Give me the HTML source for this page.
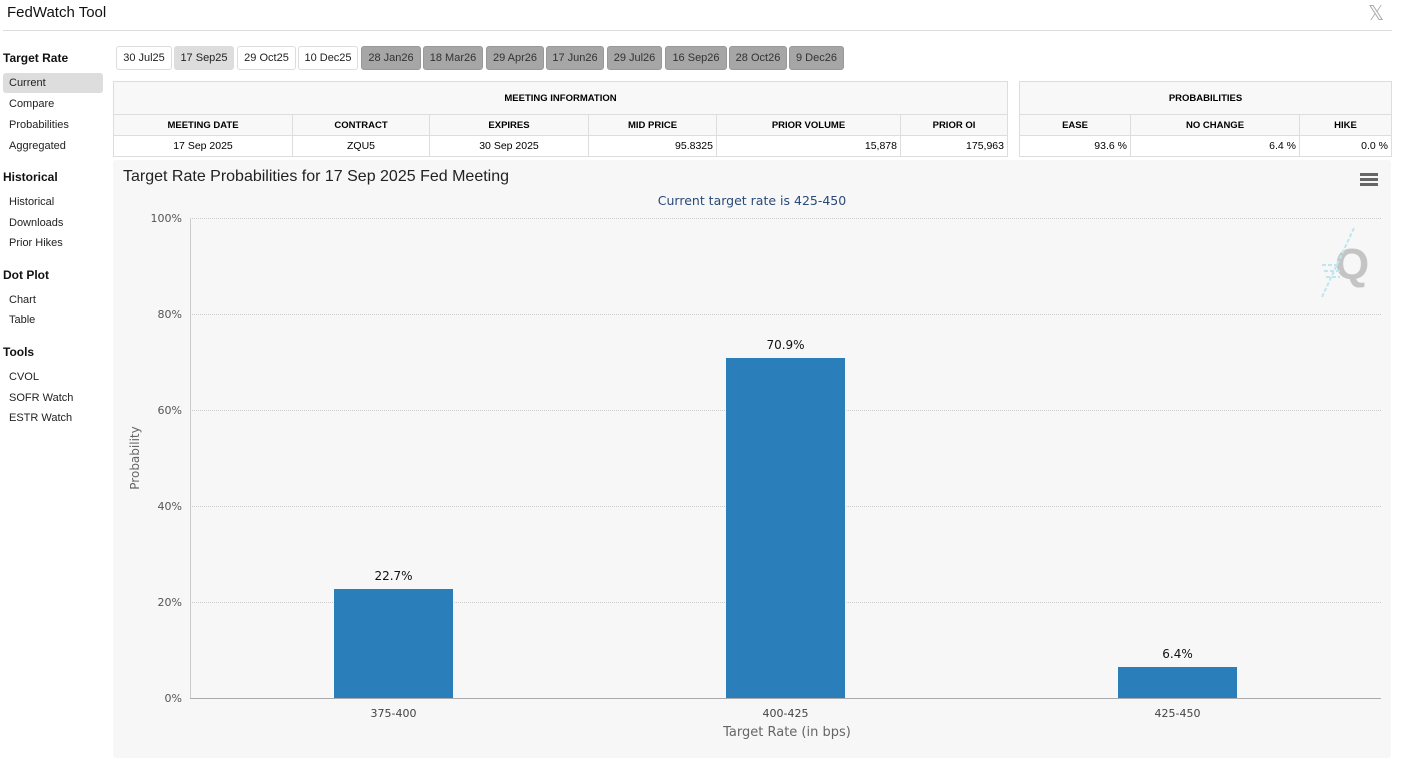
<!DOCTYPE html>
<html><head><style>
body{margin:0;width:1402px;height:766px;background:#fff;font-family:"Liberation Sans",Arial,sans-serif;position:relative;overflow:hidden;color:#000}
.a{position:absolute}
.btn{position:absolute;top:46px;height:22px;border:1px solid #ddd;border-radius:3px;font-size:11px;line-height:22px;text-align:center;background:#fff;color:#222;box-sizing:content-box}
.g{background:#a6a6a6;border-color:#999;color:#333}
.nav{position:absolute;left:9px;font-size:11px;color:#222}
.hd{position:absolute;left:3px;font-size:12px;font-weight:bold;color:#111}
table{position:absolute;border-collapse:collapse;font-size:10px}
td{border:1px solid #ddd;padding:0 3px;height:20px}
.h td{font-weight:bold;text-align:center;background:#f8f8f8;font-size:9.5px}
.t td{height:32px;font-weight:bold;text-align:center;background:#f8f8f8;font-size:9.5px}
.r td{text-align:right;font-size:10.5px}
.grid{position:absolute;left:190px;width:1191px;border-top:1px dotted #ccc;height:0}
.yl{position:absolute;width:40px;left:142px;text-align:right;font-size:11px;color:#555;font-family:"DejaVu Sans",sans-serif}
.bar{position:absolute;background:#2a7fba;width:119px}
.bl{position:absolute;width:119px;text-align:center;font-size:12px;color:#111;font-family:"DejaVu Sans",sans-serif}
.xl{position:absolute;width:119px;text-align:center;font-size:11px;color:#444;top:707px;font-family:"DejaVu Sans",sans-serif}
</style></head><body>
<div class="a" style="left:7px;top:4px;font-size:15px;color:#111">FedWatch Tool</div>
<div class="a" style="left:1368px;top:1px;font-size:20px;color:#aaa;font-family:'DejaVu Sans',sans-serif">𝕏</div>
<div class="a" style="left:3px;top:30px;width:1389px;border-top:1px solid #ddd"></div>

<div class="hd" style="top:51px">Target Rate</div>
<div class="a" style="left:3px;top:73px;width:100px;height:20px;background:#ddd;border-radius:3px"></div>
<div class="nav" style="top:77px">Current</div>
<div class="nav" style="top:98px">Compare</div>
<div class="nav" style="top:119px">Probabilities</div>
<div class="nav" style="top:140px">Aggregated</div>
<div class="hd" style="top:170px">Historical</div>
<div class="nav" style="top:196px">Historical</div>
<div class="nav" style="top:217px">Downloads</div>
<div class="nav" style="top:237px">Prior Hikes</div>
<div class="hd" style="top:268px">Dot Plot</div>
<div class="nav" style="top:294px">Chart</div>
<div class="nav" style="top:314px">Table</div>
<div class="hd" style="top:345px">Tools</div>
<div class="nav" style="top:371px">CVOL</div>
<div class="nav" style="top:392px">SOFR Watch</div>
<div class="nav" style="top:412px">ESTR Watch</div>

<div class="btn" style="left:116px;width:54px">30 Jul25</div>
<div class="btn" style="left:174px;width:58px;background:#ddd">17 Sep25</div>
<div class="btn" style="left:237px;width:57px">29 Oct25</div>
<div class="btn" style="left:298px;width:58px">10 Dec25</div>
<div class="btn g" style="left:361px;width:58px">28 Jan26</div>
<div class="btn g" style="left:423px;width:58px">18 Mar26</div>
<div class="btn g" style="left:486px;width:56px">29 Apr26</div>
<div class="btn g" style="left:546px;width:56px">17 Jun26</div>
<div class="btn g" style="left:607px;width:53px">29 Jul26</div>
<div class="btn g" style="left:665px;width:60px">16 Sep26</div>
<div class="btn g" style="left:729px;width:56px">28 Oct26</div>
<div class="btn g" style="left:789px;width:53px">9 Dec26</div>

<table style="left:113px;top:81px;width:895px">
<tr class="t"><td colspan="6">MEETING INFORMATION</td></tr>
<tr class="h"><td style="width:172px">MEETING DATE</td><td style="width:130px">CONTRACT</td><td style="width:152px">EXPIRES</td><td style="width:121px">MID PRICE</td><td style="width:177px">PRIOR VOLUME</td><td>PRIOR OI</td></tr>
<tr class="r"><td style="text-align:center">17 Sep 2025</td><td style="text-align:center">ZQU5</td><td style="text-align:center">30 Sep 2025</td><td>95.8325</td><td>15,878</td><td>175,963</td></tr>
</table>
<table style="left:1019px;top:81px;width:373px">
<tr class="t"><td colspan="3">PROBABILITIES</td></tr>
<tr class="h"><td style="width:104px">EASE</td><td style="width:162px">NO CHANGE</td><td>HIKE</td></tr>
<tr class="r"><td>93.6 %</td><td>6.4 %</td><td>0.0 %</td></tr>
</table>

<div class="a" style="left:113px;top:160px;width:1278px;height:598px;background:#f7f7f7;border-radius:3px"></div>
<div class="a" style="left:123px;top:168px;font-size:16px;color:#222">Target Rate Probabilities for 17 Sep 2025 Fed Meeting</div>
<div class="a" style="left:1360px;top:173px;width:18px;height:3px;background:#666;box-shadow:0 5px 0 #666,0 10px 0 #666"></div>
<div class="a" style="left:113px;width:1278px;top:193px;text-align:center;font-size:12.5px;color:#2a4a7a;font-family:'DejaVu Sans',sans-serif">Current target rate is 425-450</div>
<div class="a" style="left:1335px;top:240px;font-size:44px;font-weight:bold;color:#c4c4c4">Q</div>
<svg class="a" style="left:1318px;top:225px" width="40" height="75"><g stroke="#bfe6ef" stroke-width="2" stroke-dasharray="4 2"><line x1="36" y1="3" x2="4" y2="72"/><line x1="4" y1="40" x2="22" y2="40"/><line x1="6" y1="46" x2="22" y2="46"/><line x1="8" y1="52" x2="22" y2="52"/></g></svg>

<div class="grid" style="top:218px"></div>
<div class="grid" style="top:314px"></div>
<div class="grid" style="top:410px"></div>
<div class="grid" style="top:506px"></div>
<div class="grid" style="top:602px"></div>
<div class="a" style="left:190px;top:218px;height:480px;border-left:1px solid #ccc"></div>
<div class="a" style="left:190px;top:698px;width:1191px;border-top:1px solid #aaa"></div>
<div class="yl" style="top:212px">100%</div>
<div class="yl" style="top:308px">80%</div>
<div class="yl" style="top:404px">60%</div>
<div class="yl" style="top:500px">40%</div>
<div class="yl" style="top:596px">20%</div>
<div class="yl" style="top:692px">0%</div>
<div class="a" style="left:95px;top:451px;width:80px;text-align:center;transform:rotate(-90deg);font-size:12px;color:#666;font-family:'DejaVu Sans',sans-serif">Probability</div>

<div class="bar" style="left:334px;top:589px;height:109px"></div>
<div class="bar" style="left:726px;top:358px;height:340px"></div>
<div class="bar" style="left:1118px;top:667px;height:31px"></div>
<div class="bl" style="left:334px;top:569px">22.7%</div>
<div class="bl" style="left:726px;top:338px">70.9%</div>
<div class="bl" style="left:1118px;top:647px">6.4%</div>
<div class="xl" style="left:334px">375-400</div>
<div class="xl" style="left:726px">400-425</div>
<div class="xl" style="left:1118px">425-450</div>
<div class="a" style="left:113px;top:725px;text-align:center;font-size:13px;color:#666;font-family:'DejaVu Sans',sans-serif;width:1348px">Target Rate (in bps)</div>
</body></html>
